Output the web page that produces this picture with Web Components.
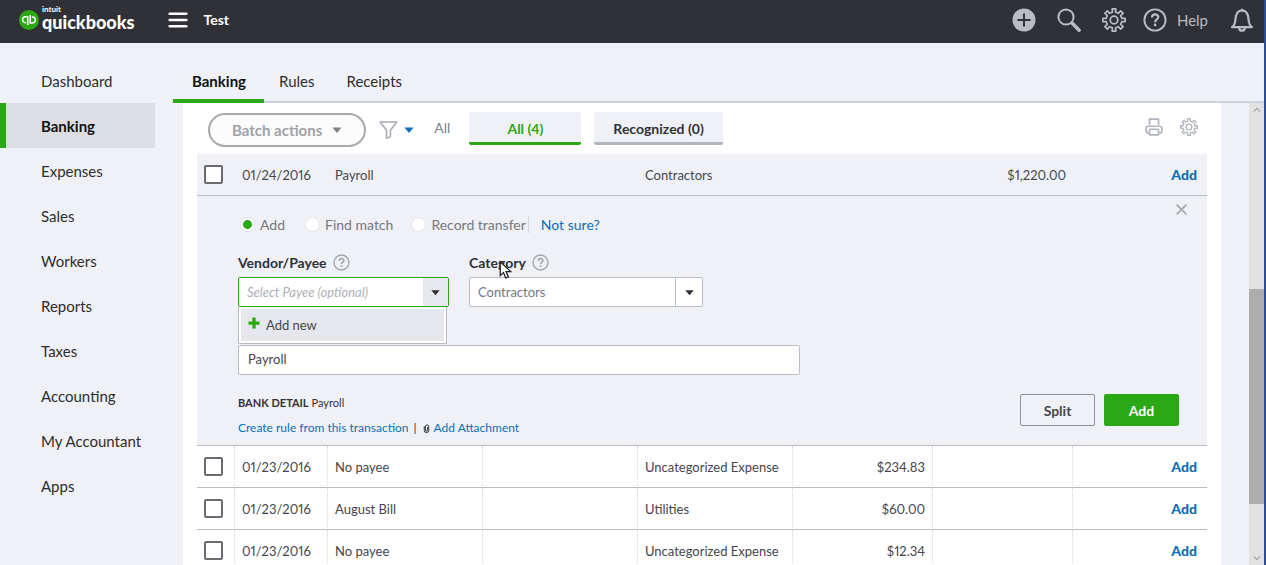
<!DOCTYPE html>
<html lang="en">
<head>
<meta charset="utf-8">
<meta name="viewport" content="width=device-width, initial-scale=1">
<title>Banking</title>
<style>
  html, body { height: 100%; margin: 0; }
  body {
    font-family: Lato, "Liberation Sans", sans-serif;
    font-size: 13px;
    color: #44464c;
    background: #f0f1f6;
    overflow: hidden;
    --green: #2aa815;
    --blue: #0b6fb8;
    --line: #babcc4;
    --panel: #f0f1f6;
  }
</style>
</head>
<body>
<banking-app></banking-app>

<script>
  // outline of a toothed wheel centred in a 24x24 box
  function gearPath(teeth, outer, inner) {
    const step = Math.PI * 2 / teeth;
    const at = (a, r) => (12 + Math.cos(a) * r).toFixed(2) + ' ' + (12 + Math.sin(a) * r).toFixed(2);
    let d = '';
    for (let i = 0; i < teeth; i++) {
      const a = i * step - Math.PI / 2;
      d += (i ? 'L' : 'M') + at(a - step * 0.26, inner) + 'L' + at(a - step * 0.2, outer)
        + 'L' + at(a + step * 0.2, outer) + 'L' + at(a + step * 0.26, inner);
    }
    return d + 'Z';
  }

  const gear = `<path d="${gearPath(8, 11.3, 8)}" stroke-width="1.7" stroke-linejoin="round"/><circle cx="12" cy="12" r="3.8" stroke-width="1.8"/>`;

  const icons = {
    gear,
    plus: '<circle cx="12" cy="12" r="11.5" fill="currentColor" stroke="none"/><path d="M12 5.5v13M5.5 12h13" stroke="#303136" stroke-width="2"/>',
    search: '<circle cx="9" cy="9" r="7.6" stroke-width="2"/><path d="M15 15l7.2 7.2" stroke-width="3.4" stroke-linecap="round"/>',
    help: '<circle cx="12" cy="12" r="10.6" stroke-width="1.9"/><path d="M9 9.6c0-4.2 6.3-4 6.3-.5 0 2.3-3.2 2.3-3.2 5.1" stroke-width="2.2"/><circle cx="12.1" cy="17" r="1.4" fill="currentColor" stroke="none"/>',
    bell: '<path d="M2 19.2c3-2 3.2-4.5 3.5-8C5.8 5.5 8.5 2.5 12 2.3c3.5.2 6.2 3.2 6.5 8.9.3 3.5.5 6 3.5 8z" stroke-width="2.2" stroke-linejoin="round"/><path d="M12 .8v2M9 20c.5 3.6 5.5 3.6 6 0" stroke-width="2.2"/>',
    menu: '<path d="M2 4.5h20M2 12h20M2 19.5h20" stroke-width="3" stroke-linecap="round"/>',
    qb: '<circle cx="12" cy="12" r="12" fill="#2aa815" stroke="none"/><path d="M10.5 18V8.2H7.8a3.5 3.5 0 0 0 0 7h.8M13.5 6v9.5h2.7a3.5 3.5 0 0 0 0-7h-.8" stroke="#fff" stroke-width="1.8"/>',
    funnel: '<path d="M1.5 2.5h21l-8 10.5v8l-5 2V13z" stroke-width="2" stroke-linejoin="round"/>',
    print: '<path d="M6 9V1.5h12V9" stroke-width="2.2"/><rect x="1.5" y="11" width="21" height="9" rx="3" stroke-width="2.2"/><rect x="6" y="15" width="12" height="7.5" rx="1" fill="#fff" stroke-width="2.2"/>',
    close: '<path d="M3 3l18 18M21 3L3 21" stroke-width="3.2"/>',
    caret: '<path d="M1 6h22L12 19z" fill="currentColor" stroke="none"/>',
    add: '<path d="M12 1v22M1 12h22" stroke-width="6.5"/>',
    clip: '<path d="M6 6v11a6 6 0 0 0 12 0V7a4.5 4.5 0 0 0-9 0v9a3 3 0 0 0 6 0V8" stroke-width="2.6"/>',
    up: '<path d="M3 17l9-10 9 10" stroke-width="3"/>',
    down: '<path d="M3 7l9 10 9-10" stroke-width="3"/>',
    pointer: '<path d="M3 1v18.5l4.3-4 3 7.2 3.6-1.5-3-7H17z" fill="#fff" stroke="#222" stroke-width="1.7"/>'
  };

  function define(name, render) {
    customElements.define(name, class extends HTMLElement {
      constructor() {
        super();
        this.attachShadow({ mode: 'open' });
      }
      connectedCallback() {
        this.shadowRoot.innerHTML = render(this);
      }
    });
  }

  const base = `
    *, *::before { box-sizing: border-box; }
    button, input, select { font: inherit; color: inherit; margin: 0; }
    button { background: none; border: 0; padding: 0; display: flex; align-items: center; justify-content: center; }
    a { text-decoration: none; color: inherit; }
  `;

  define('ui-icon', el => `
    <style>
      :host { display: block; flex: none; width: var(--size, 24px); height: var(--size, 24px); }
      svg { display: block; width: 100%; height: 100%; overflow: visible; }
    </style>
    <svg viewBox="0 0 24 24" fill="none" stroke="currentColor" aria-hidden="true">${icons[el.getAttribute('name')]}</svg>`);

  define('app-header', () => `
    <style>
      ${base}
      :host { display: flex; align-items: center; justify-content: space-between; height: 43px; padding: 0 10px 3px 19px; background: #303136; color: #b9bcc2; box-sizing: border-box; }
      .left, .right, .logo, .help, .round { display: flex; align-items: center; }
      .left { color: #fff; }
      .logo { gap: 3px; }
      .logo ui-icon { --size: 20px; }
      .word { display: flex; flex-direction: column; font-weight: 700; }
      small { font-size: 8px; line-height: 8px; }
      b { font-size: 18px; line-height: 18px; padding-bottom: 4px; }
      .menu { margin-left: 33px; }
      .menu ui-icon { --size: 20px; }
      .company { margin-left: 16px; font-size: 14px; font-weight: 700; padding-bottom: 2px; }
      .right { gap: 17px; }
      .round { gap: 21px; }
      .help { gap: 10px; font-size: 15px; margin-right: 5px; }
    </style>
    <div class="left">
      <a class="logo" href="#"><ui-icon name="qb"></ui-icon><span class="word"><small>intuit</small><b>quickbooks</b></span></a>
      <button class="menu" aria-label="Menu"><ui-icon name="menu"></ui-icon></button>
      <span class="company">Test</span>
    </div>
    <div class="right">
      <div class="round">
        <button aria-label="Create"><ui-icon name="plus"></ui-icon></button>
        <button aria-label="Search"><ui-icon name="search"></ui-icon></button>
        <button aria-label="Settings"><ui-icon name="gear"></ui-icon></button>
      </div>
      <button class="help"><ui-icon name="help"></ui-icon><span>Help</span></button>
      <button aria-label="Notifications"><ui-icon name="bell"></ui-icon></button>
    </div>`);

  const pages = ['Dashboard', 'Banking', 'Expenses', 'Sales', 'Workers', 'Reports', 'Taxes', 'Accounting', 'My Accountant', 'Apps'];

  define('side-nav', () => `
    <style>
      ${base}
      :host { display: block; width: 155px; flex: none; padding-top: 15px; }
      nav { display: flex; flex-direction: column; }
      a { height: 45px; display: flex; align-items: center; padding: 1px 0 0 35px; border-left: 6px solid transparent; font-size: 15px; color: #2c2d31; }
      a.on { background: #dddee3; border-color: var(--green); color: #111; font-weight: 700; }
    </style>
    <nav>${pages.map(p => `<a href="#"${p === 'Banking' ? ' class="on" aria-current="page"' : ''}>${p}</a>`).join('')}</nav>`);

  define('page-tabs', () => `
    <style>
      ${base}
      :host { display: flex; height: 60px; border-bottom: 2px solid #d0d2d9; box-sizing: border-box; font-size: 15px; color: #2c2d31; }
      a { display: flex; align-items: center; padding: 16px 17px 0 15px; height: 60px; }
      a.on { padding: 20px 18px 0 19px; border-bottom: 4px solid var(--green); font-weight: 700; color: #111; }
    </style>
    <a class="on" href="#">Banking</a><a href="#">Rules</a><a href="#">Receipts</a>`);

  define('table-toolbar', () => `
    <style>
      ${base}
      :host { display: flex; align-items: center; height: 51px; padding: 2px 9px 0 11px; color: #808288; box-sizing: border-box; }
      .batch { height: 34px; padding: 0 22px; gap: 10px; border: 2px solid #a9aaad; border-radius: 17px; background: #fcfcfc; color: #a0a1a5; font-size: 15px; font-weight: 700; }
      .caret { --size: 10px; }
      .batch .caret { color: #808288; }
      .filter { margin: 0 20px 0 13px; gap: 6px; }
      .filter ui-icon:first-child { --size: 19px; color: #a9abb3; }
      .filter .caret { color: var(--blue); }
      .all { font-size: 14px; margin: 0 19px 4px 0; }
      .views { display: flex; gap: 13px; margin-bottom: 2px; }
      .views button { min-width: 112px; height: 33px; padding: 2px 19px 0; background: var(--panel); border-bottom: 3px solid #b1b4bc; border-radius: 2px; color: #303136; font-size: 14px; font-weight: 700; }
      .views .on { color: var(--green); border-color: var(--green); }
      .tools { display: flex; gap: 17px; margin: 0 0 6px auto; color: #b0b3bb; }
      .tools ui-icon { --size: 18px; }
    </style>
    <button class="batch">Batch actions <ui-icon class="caret" name="caret"></ui-icon></button>
    <button class="filter" aria-label="Filter"><ui-icon name="funnel"></ui-icon><ui-icon class="caret" name="caret"></ui-icon></button>
    <span class="all">All</span>
    <div class="views"><button class="on">All (4)</button><button>Recognized (0)</button></div>
    <div class="tools">
      <button aria-label="Print"><ui-icon name="print"></ui-icon></button>
      <button aria-label="Table settings"><ui-icon name="gear"></ui-icon></button>
    </div>`);

  define('transaction-detail', () => `
    <style>
      ${base}
      :host { display: block; position: relative; height: 249px; padding: 19px 28px 0 41px; box-sizing: border-box; }
      .close { position: absolute; right: 19px; top: 7px; color: #a4a6ad; }
      .close ui-icon { --size: 13px; }
      .modes { display: flex; align-items: center; height: 18px; font-size: 14px; color: #76787e; padding-left: 2px; }
      .modes label { display: flex; align-items: center; gap: 5px; margin-right: 20px; }
      .modes label + label { margin-right: 18px; }
      .modes label:last-of-type { margin-right: 2px; }
      input[type=radio] { appearance: none; width: 15px; height: 15px; border-radius: 50%; background: #fff; border: 1px solid #e2e3e8; }
      input[type=radio]:checked { background: radial-gradient(circle, var(--green) 4px, #fff 5px); }
      .modes a { border-left: 1px solid #d5d7dd; padding-left: 12px; color: var(--blue); }
      .fields { display: flex; gap: 20px; margin-top: 19px; }
      .payee { width: 211px; position: relative; }
      .category { width: 234px; position: relative; }
      .caption { display: flex; align-items: center; gap: 6px; height: 20px; margin-bottom: 5px; font-size: 14px; font-weight: 700; color: #303136; }
      .caption ui-icon { --size: 17px; color: #a4a6ad; }
      .box { display: flex; height: 30px; border: 1px solid var(--line); border-radius: 2px; background: #fff; position: relative; }
      .payee .box { border-color: var(--green); }
      .box input, .box select { flex: 1; min-width: 0; border: 0; outline: 0; padding: 0 8px; background: none; color: #76787e; }
      .box select { appearance: none; }
      .box ::placeholder { font-style: italic; color: #aeb0b6; }
      .arrow { width: 25px; background: #e7e8ed; color: #303136; display: flex; align-items: center; justify-content: center; --size: 9px; }
      .category .arrow { width: 27px; background: none; border-left: 1px solid var(--line); pointer-events: none; }
      .menu { position: absolute; top: 100%; left: 0; right: 2px; border: 1px solid var(--line); border-top: 0; padding: 2px; background: #fff; }
      .menu button { width: 100%; height: 32px; background: #e6e7ec; justify-content: flex-start; padding-left: 7px; gap: 6px; color: #44464c; }
      .menu ui-icon { --size: 12px; color: var(--green); margin-bottom: 4px; }
      .cursor { position: absolute; left: 29px; top: 9px; --size: 18px; }
      .memo { display: block; width: 562px; max-width: 100%; height: 30px; margin-top: 38px; padding: 0 9px 3px; border: 1px solid var(--line); border-radius: 2px; background: #fff; }
      .foot { display: flex; justify-content: space-between; align-items: flex-start; margin-top: 19px; font-size: 12px; }
      .info p { margin: 0 0 7px; line-height: 18px; display: flex; align-items: center; gap: 3px; color: #303136; }
      .info .bank { font-size: 11px; }
      .info a { color: var(--blue); }
      .info .bar { margin: 0 2px; }
      .info ui-icon { --size: 9px; }
      .actions { display: flex; gap: 9px; font-size: 14px; font-weight: 700; }
      .actions button { width: 75px; height: 32px; border: 1px solid #8d9096; border-radius: 2px; }
      .actions .primary { background: var(--green); border-color: var(--green); color: #fff; }
    </style>
    <button class="close" aria-label="Close"><ui-icon name="close"></ui-icon></button>
    <div class="modes">
      <label><input type="radio" name="mode" checked>Add</label>
      <label><input type="radio" name="mode">Find match</label>
      <label><input type="radio" name="mode">Record transfer</label>
      <a href="#">Not sure?</a>
    </div>
    <div class="fields">
      <div class="payee">
        <div class="caption"><label for="payee">Vendor/Payee</label><ui-icon name="help"></ui-icon></div>
        <div class="box"><input id="payee" placeholder="Select Payee (optional)"><button class="arrow" aria-label="Show payees"><ui-icon name="caret"></ui-icon></button></div>
        <div class="menu"><button><ui-icon name="add"></ui-icon>Add new</button></div>
      </div>
      <div class="category">
        <div class="caption"><label for="category">Category</label><ui-icon name="help"></ui-icon></div>
        <div class="box"><select id="category"><option>Contractors</option></select><span class="arrow"><ui-icon name="caret"></ui-icon></span></div>
        <ui-icon class="cursor" name="pointer"></ui-icon>
      </div>
    </div>
    <input class="memo" aria-label="Memo" value="Payroll">
    <div class="foot">
      <div class="info">
        <p class="bank"><b>BANK DETAIL</b> <span>Payroll</span></p>
        <p><a href="#">Create rule from this transaction</a><span class="bar">|</span><ui-icon name="clip"></ui-icon><a href="#">Add Attachment</a></p>
      </div>
      <div class="actions"><button>Split</button><button class="primary">Add</button></div>
    </div>`);

  const rows = [
    { date: '01/24/2016', text: 'Payroll', category: 'Contractors', spent: '', received: '$1,220.00', open: true },
    { date: '01/23/2016', text: 'No payee', category: 'Uncategorized Expense', spent: '$234.83', received: '' },
    { date: '01/23/2016', text: 'August Bill', category: 'Utilities', spent: '$60.00', received: '' },
    { date: '01/23/2016', text: 'No payee', category: 'Uncategorized Expense', spent: '$12.34', received: '' }
  ];

  const rowHtml = r => `
    <tr${r.open ? ' class="open"' : ''}>
      <td class="check"><input type="checkbox" aria-label="Select ${r.text}"></td>
      <td>${r.date}</td><td>${r.text}</td><td></td><td>${r.category}</td>
      <td class="num">${r.spent}</td><td class="num">${r.received}</td>
      <td class="act"><a href="#">Add</a></td>
    </tr>
    ${r.open ? '<tr class="detail"><td colspan="8"><transaction-detail></transaction-detail></td></tr>' : ''}`;

  define('transaction-table', () => `
    <style>
      ${base}
      :host { display: block; font-variant-numeric: proportional-nums; }
      table { width: 100%; table-layout: fixed; border-collapse: separate; border-spacing: 0; }
      td { height: 42px; padding: 0 7px; border-bottom: 1px solid var(--line); border-right: 1px dotted #d5d7dd; white-space: nowrap; }
      td:last-child { border-right: 0; }
      .open td { background: var(--panel); border-right: 0; }
      .detail td { padding: 0; background: var(--panel); }
      .num { text-align: right; }
      td.act { text-align: right; padding-right: 10px; font-size: 14px; font-weight: 900; color: var(--blue); }
      input { appearance: none; display: block; width: 19px; height: 19px; border: 2px solid #6b6c72; border-radius: 2px; background: #fff; }
    </style>
    <table>
      <colgroup><col style="width:38px"><col style="width:93px"><col><col><col><col style="width:140px"><col style="width:140px"><col style="width:134px"></colgroup>
      <tbody>${rows.map(rowHtml).join('')}</tbody>
    </table>`);

  define('scroll-rail', () => `
    <style>
      :host { display: flex; flex-direction: column; width: 15px; flex: none; background: #e1e1e2; color: #808288; box-sizing: border-box; padding: 3px 0; align-items: center; }
      ui-icon { --size: 8px; }
      .thumb { width: 100%; flex: 215; background: #adadae; }
      .before { flex: 175; }
      .after { flex: 50; }
    </style>
    <ui-icon name="up"></ui-icon><div class="before"></div><div class="thumb"></div><div class="after"></div><ui-icon name="down"></ui-icon>`);

  define('banking-app', () => `
    <style>
      :host { display: flex; flex-direction: column; height: 100vh; box-sizing: border-box; border-right: 2px solid #2a4d96; }
      .body { display: flex; flex: 1; min-height: 0; }
      main { flex: 1; min-width: 0; margin-left: 18px; display: flex; flex-direction: column; }
      .view { flex: 1; min-height: 0; display: flex; }
      .panel { flex: 1; min-width: 0; margin: 0 28px 0 10px; padding: 0 14px; background: #fff; overflow: hidden; }
    </style>
    <app-header></app-header>
    <div class="body">
      <side-nav></side-nav>
      <main>
        <page-tabs></page-tabs>
        <div class="view">
          <div class="panel">
            <table-toolbar></table-toolbar>
            <transaction-table></transaction-table>
          </div>
          <scroll-rail></scroll-rail>
        </div>
      </main>
    </div>`);
</script>
</body>
</html>
